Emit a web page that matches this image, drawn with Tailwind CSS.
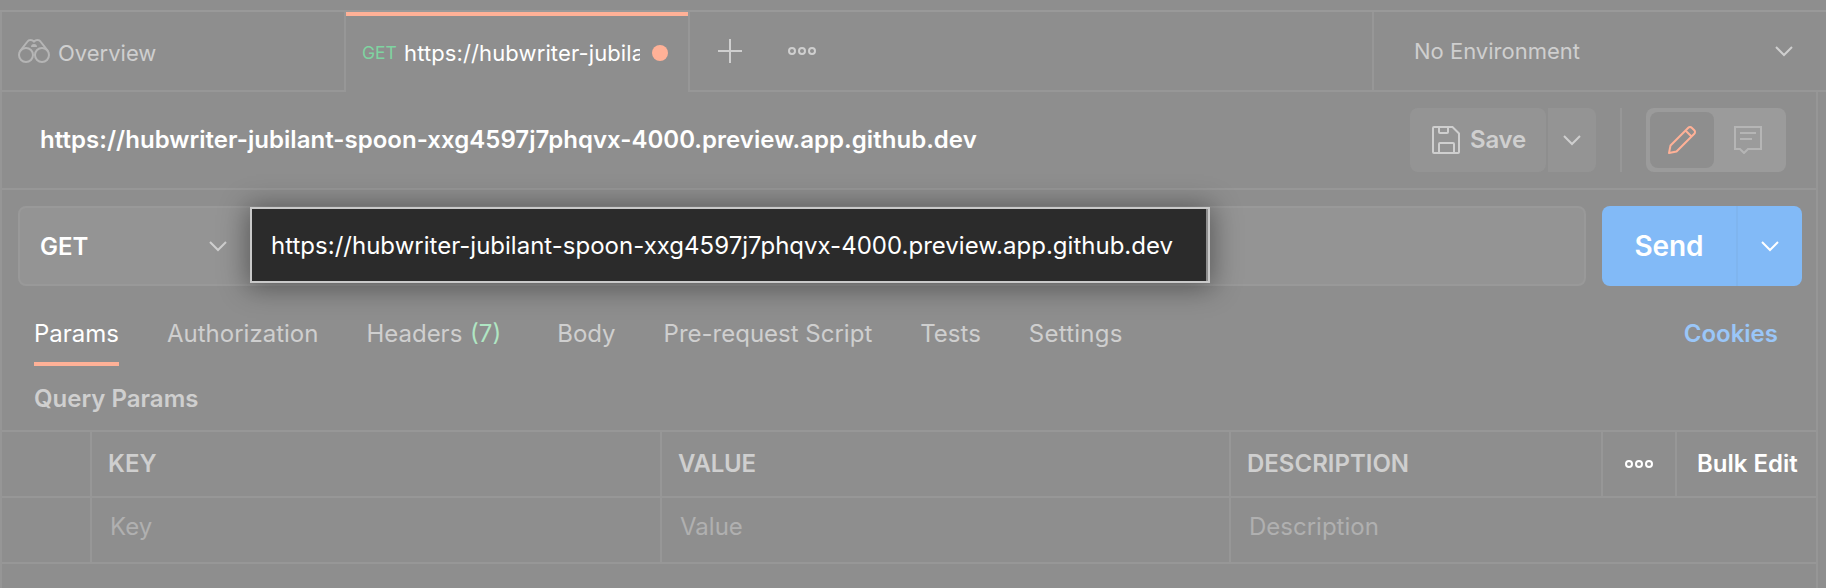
<!DOCTYPE html>
<html lang="en">
<head>
<meta charset="utf-8">
<title>Request</title>
<script src="https://cdn.jsdelivr.net/npm/@tailwindcss/browser@4"></script>
</head>
<body class="h-[588px] w-[1826px] overflow-hidden bg-[#8e8e8e] font-['Inter',sans-serif] text-[24px] leading-[32px] text-[#cfcfcf]">
<div class="flex h-full flex-col pt-[10px]">
  <header class="flex h-[82px] shrink-0 border-t-2 border-[#999999]">
    <div class="flex w-[346px] items-center border-x-2 border-b-2 border-[#979797] pl-4 text-[22px]">
      <svg class="h-6 w-8 text-[#b5b5b5]" viewBox="0 0 32 24" fill="none" stroke="currentColor" stroke-width="2"><circle cx="8" cy="16" r="7"/><circle cx="24" cy="16" r="7"/><path d="M2 12.200L9.500 2.500Q10.500 1 12.500 1Q14.500 1 16 2.500Q17.500 1 19.500 1Q21.500 1 22.500 2.500L30 12.200"/><path d="M13 8a3 3 0 0 1 6 0z" fill="currentColor" stroke="none"/></svg>
      <span class="ml-2 pt-[3px]">Overview</span>
    </div>
    <div class="flex w-[342px] items-center border-t-4 border-[#ffb197] pb-0.5 pl-4">
      <span class="w-[34px] text-[17.5px] tracking-[-0.1px] text-[#7fd4a1]">GET</span>
      <span class="ml-2 w-[236px] overflow-hidden text-[22px] tracking-[0.12px] whitespace-nowrap text-white">https://hubwriter-jubilant</span>
      <span class="ml-3 size-4 shrink-0 rounded-full bg-[#ffb197]"></span>
    </div>
    <div class="flex w-[684px] items-center border-b-2 border-l-2 border-[#979797] pl-7">
      <svg class="size-6 text-[#cfcfcf]" viewBox="0 0 24 24" stroke="currentColor" stroke-width="2"><path d="M12 0v24M0 12h24"/></svg>
      <svg class="ml-[46px] h-2 w-7" viewBox="0 0 28 8" fill="none" stroke="currentColor" stroke-width="2"><circle cx="4" cy="4" r="3"/><circle cx="14" cy="4" r="3"/><circle cx="24" cy="4" r="3"/></svg>
    </div>
    <div class="flex flex-1 items-center justify-between border-b-2 border-l-2 border-[#979797] pr-8 pl-10 text-[22px]">
      <span>No Environment</span>
      <svg class="h-3 w-5" viewBox="0 0 20 12" fill="none" stroke="currentColor" stroke-width="2"><path d="M2 2l8 8 8-8"/></svg>
    </div>
  </header>
  <main class="mr-2 flex flex-1 flex-col border-x-2 border-[#969696]">
    <div class="flex h-[98px] shrink-0 items-center border-b-2 border-[#979797] pr-[30px] pl-[38px]">
      <h1 class="font-semibold tracking-[0.035px] whitespace-nowrap text-white">https://hubwriter-jubilant-spoon-xxg4597j7phqvx-4000.preview.app.github.dev</h1>
      <div class="ml-auto flex h-16">
        <button class="flex w-[136px] items-center rounded-lg bg-[#949494] pl-[22px] font-semibold">
          <svg class="size-7" viewBox="0 0 28 28" fill="none" stroke="currentColor" stroke-width="2"><path d="M2 1h18.500L27 7.500V26a1 1 0 0 1-1 1H2a1 1 0 0 1-1-1V2a1 1 0 0 1 1-1zM7 1v5a1 1 0 0 0 1 1h7a1 1 0 0 0 1-1V1M7 27v-9a1 1 0 0 1 1-1h13a1 1 0 0 1 1 1v9"/></svg>
          <span class="ml-2.5 tracking-[-0.2px]">Save</span>
        </button>
        <button class="ml-0.5 flex w-12 items-center justify-center rounded-r-lg bg-[#949494]"><svg class="h-3 w-5" viewBox="0 0 20 12" fill="none" stroke="currentColor" stroke-width="2"><path d="M2 2l8 8 8-8"/></svg></button>
        <span class="ml-6 w-0.5 bg-[#979797]"></span>
        <div class="ml-6 flex w-[140px] rounded-lg bg-[#9b9b9b] p-1">
          <span class="flex w-16 items-center justify-center rounded-lg bg-[#8e8e8e]"><svg class="size-7 text-[#ffb197]" viewBox="0 0 28 28" fill="none" stroke="currentColor" stroke-width="2" stroke-linejoin="round"><path d="M1 27l1.500-7.500L20.300 1.700a2.400 2.400 0 0 1 3.400 0l2.600 2.600a2.400 2.400 0 0 1 0 3.400L8.500 25.500zM17.500 4.500l6 6"/></svg></span>
          <span class="flex flex-1 items-center justify-center"><svg class="size-7 text-[#b5b5b5]" viewBox="0 0 28 28" fill="none" stroke="currentColor" stroke-width="2"><path d="M1 1h26v22H14l-4 4-4-4H1zM6 7h16M6 13h12"/></svg></span>
        </div>
      </div>
    </div>
    <div class="flex h-24 shrink-0 pt-4 pl-4">
      <div class="relative flex h-20 w-[1568px] items-center rounded-lg border-2 border-[#999999] bg-[#949494] pl-5">
        <span class="w-[168px] pt-0.5 font-semibold text-white">GET</span>
        <svg class="h-3 w-5" viewBox="0 0 20 12" fill="none" stroke="currentColor" stroke-width="2"><path d="M2 2l8 8 8-8"/></svg>
        <div class="absolute top-[-1px] left-[230px] flex h-[76px] w-[960px] border-2 border-[#c9c9c9] bg-[#2b2b2b] shadow-[0_2px_26px_3px_rgba(0,0,0,0.4)]">
          <span class="flex flex-1 items-center border-r-2 border-[#8e8e8e] pt-0.5 pl-[19px] tracking-[0.01px] whitespace-nowrap text-white">https://hubwriter-jubilant-spoon-xxg4597j7phqvx-4000.preview.app.github.dev</span>
        </div>
      </div>
      <div class="ml-4 flex h-20 w-[200px] overflow-hidden rounded-lg bg-[#82baf7] text-white">
        <span class="flex w-[134px] items-center justify-center text-[28px] font-semibold tracking-[-0.1px]">Send</span>
        <span class="flex flex-1 items-center justify-center border-l-2 border-[#7fb5ef]"><svg class="h-3 w-5" viewBox="0 0 20 12" fill="none" stroke="currentColor" stroke-width="2"><path d="M2 2l8 8 8-8"/></svg></span>
      </div>
    </div>
    <nav class="flex h-20 shrink-0 gap-12 pr-[38px] pl-8 whitespace-nowrap">
      <span class="border-b-4 border-[#ffb197] pt-8 text-white">Params</span>
      <span class="pt-8">Authorization</span>
      <span class="mr-2 pt-8">Headers <span class="ml-px text-[#b0e6c3]">(7)</span></span>
      <span class="pt-8">Body</span>
      <span class="pt-8">Pre-request Script</span>
      <span class="pt-8">Tests</span>
      <span class="pt-8 tracking-[0.25px]">Settings</span>
      <span class="ml-auto pt-8 font-semibold text-[#9ac6f8]">Cookies</span>
    </nav>
    <h2 class="flex h-16 shrink-0 items-center pt-0.5 pl-8 font-semibold">Query Params</h2>
    <div class="grid h-[134px] shrink-0 grid-cols-[90px_570px_569px_372px_74px_1fr] grid-rows-[66px_66px] border-y-2 border-[#979797] font-semibold [&>*]:flex [&>*]:items-center [&>*]:border-[#979797]">
      <div class="border-r-2 border-b-2"></div>
      <div class="border-r-2 border-b-2 pl-4">KEY</div>
      <div class="border-r-2 border-b-2 pl-4 tracking-[-0.2px]">VALUE</div>
      <div class="border-r-2 border-b-2 pl-4">DESCRIPTION</div>
      <div class="justify-center border-r-2 border-b-2 text-white"><svg class="h-2.5 w-7" viewBox="0 0 28 10" fill="none" stroke="currentColor" stroke-width="2"><circle cx="4" cy="5" r="3"/><circle cx="14" cy="5" r="3"/><circle cx="24" cy="5" r="3"/></svg></div>
      <div class="border-b-2 pl-5 text-white">Bulk Edit</div>
      <div class="border-r-2"></div>
      <div class="border-r-2 pb-2 pl-[18px] font-normal text-[#b0b0b0]">Key</div>
      <div class="border-r-2 pb-2 pl-[18px] font-normal text-[#b0b0b0]">Value</div>
      <div class="col-span-3 pb-2 pl-[18px] font-normal text-[#b0b0b0]">Description</div>
    </div>
  </main>
</div>
</body>
</html>
